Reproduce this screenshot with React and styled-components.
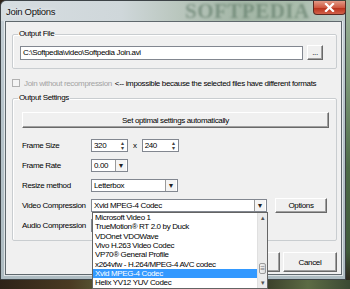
import React from "react";
import styled, { createGlobalStyle } from "styled-components";

const codecs = [
    "Microsoft Video 1",
    "TrueMotion® RT 2.0 by Duck",
    "VDOnet VDOWave",
    "Vivo H.263 Video Codec",
    "VP70® General Profile",
    "x264vfw - H.264/MPEG-4 AVC codec",
    "Xvid MPEG-4 Codec",
    "Helix YV12 YUV Codec",
];

const GlobalStyle = createGlobalStyle`
    html, body {
        margin: 0;
        padding: 0;
        width: 350px;
        height: 289px;
        overflow: hidden;
    }
    body {
        font-family: "Liberation Sans", Arial, sans-serif;
        font-size: 8px;
        letter-spacing: -0.35px;
        color: #000;
        background:
            linear-gradient(90deg, #2e2218 0%, #4a3a22 20%, #6b7a4a 38%, #a9b98e 42%, #3e4a2a 50%, #2a2a1e 70%, #5c6b44 88%, #3b4a34 100%);
    }
    * { box-sizing: border-box; }
`;

const App = () => {
    return (
        <>
            <GlobalStyle />
            <Desktop>
                <Window>
                    <TitleBar>
                        <Title>Join Options</Title>
                        <Watermark>SOFTPEDIA</Watermark>
                        <CloseButton>
                            <svg width="11" height="9" viewBox="0 0 11 9">
                                <path d="M2 1 L9 8 M9 1 L2 8" stroke="#fff" strokeWidth="2.2" strokeLinecap="square" />
                            </svg>
                        </CloseButton>
                    </TitleBar>
                    <Client>
                        <Group $top={7}>
                            <Legend>Output File</Legend>
                            <GroupBody $pad="6px 0 8px 7px">
                                <Row $gap={4}>
                                    <TextBox $width={283} $height={14}>C:\Softpedia\video\Softpedia Join.avi</TextBox>
                                    <Button $width={16} $height={15}>...</Button>
                                </Row>
                            </GroupBody>
                        </Group>
                        <CheckRow>
                            <CheckBox />
                            <DisabledText>Join without recompression</DisabledText>
                            <span>&lt;-- impossible because the selected files have different formats</span>
                        </CheckRow>
                        <Group $top={5}>
                            <Legend>Output Settings</Legend>
                            <GroupBody $pad="9px 7px 8px 9px">
                                <Button $height={16}>Set optimal settings automatically</Button>
                                <FieldList>
                                    <FieldRow>
                                        <FieldLabel>Frame Size</FieldLabel>
                                        <SpinBox value="320" />
                                        <Times>x</Times>
                                        <SpinBox value="240" />
                                    </FieldRow>
                                    <FieldRow>
                                        <FieldLabel>Frame Rate</FieldLabel>
                                        <Combo value="0.00" width={37} />
                                    </FieldRow>
                                    <FieldRow>
                                        <FieldLabel>Resize method</FieldLabel>
                                        <Combo value="Letterbox" width={87} />
                                    </FieldRow>
                                    <FieldRow>
                                        <FieldLabel>Video Compression</FieldLabel>
                                        <Combo value="Xvid MPEG-4 Codec" width={176} />
                                        <Button $width={52} $height={15} $ml={8}>Options</Button>
                                    </FieldRow>
                                    <FieldRow>
                                        <FieldLabel>Audio Compression</FieldLabel>
                                        <Combo value="" width={176} />
                                    </FieldRow>
                                </FieldList>
                            </GroupBody>
                        </Group>
                        <Footer>
                            <Button $width={54} $height={20}>OK</Button>
                            <Button $width={54} $height={20}>Cancel</Button>
                        </Footer>
                    </Client>
                    <DropList>
                        <Items>
                            {codecs.map(c => (
                                <Item key={c} $selected={c === "Xvid MPEG-4 Codec"}>{c}</Item>
                            ))}
                        </Items>
                        <ScrollBar>
                            <ScrollArrow>▴</ScrollArrow>
                            <ScrollTrack>
                                <Thumb>≡</Thumb>
                            </ScrollTrack>
                            <ScrollArrow>▾</ScrollArrow>
                        </ScrollBar>
                    </DropList>
                </Window>
            </Desktop>
        </>
    );
};

const SpinBox = ({ value }) => (
    <SpinFrame>
        <SpinText>{value}</SpinText>
        <SpinButtons>
            <span>▴</span>
            <span>▾</span>
        </SpinButtons>
    </SpinFrame>
);

const Combo = ({ value, width }) => (
    <ComboFrame $width={width}>
        <ComboText>{value}</ComboText>
        <ComboArrow>▾</ComboArrow>
    </ComboFrame>
);

export default App;

const Desktop = styled.div`
    width: 350px;
    height: 289px;
    background: linear-gradient(180deg, #9db39a 0%, #7a9676 30%, #4d6b48 60%, #3f5a3b 90%, #2f2a1f 100%) right top / 4px 280px no-repeat;
`;

const Window = styled.div`
    position: relative;
    width: 346px;
    height: 280px;
    display: flex;
    flex-direction: column;
    border: 1px solid #3d4347;
    border-radius: 6px 6px 0 0;
    background: linear-gradient(180deg, #c6d0d6 0%, #b7c4cb 40%, #aebcc2 100%);
`;

const TitleBar = styled.div`
    position: relative;
    height: 20px;
    display: flex;
    align-items: flex-start;
    padding-left: 5px;
    border-radius: 6px 6px 0 0;
    background: linear-gradient(90deg, #d6dde1 0%, #cfd7da 35%, #b9c6bd 52%, #a3b6a6 70%, #a9bcab 86%, #c2cdcc 100%);
`;

const Title = styled.div`
    margin-top: 5px;
    font-size: 9.5px;
    letter-spacing: -0.3px;
    line-height: 11px;
    color: #111;
    text-shadow: 0 0 4px rgba(255, 255, 255, 0.9);
`;

const Watermark = styled.div`
    position: absolute;
    left: 184px;
    top: -2px;
    font-family: "Liberation Serif", serif;
    font-weight: bold;
    font-size: 21px;
    letter-spacing: 0.5px;
    color: rgba(78, 108, 88, 0.5);
    filter: blur(1px);
`;

const CloseButton = styled.div`
    position: relative;
    margin-left: auto;
    margin-right: -1px;
    width: 33px;
    height: 14px;
    display: flex;
    align-items: center;
    justify-content: center;
    border: 1px solid #5b2a22;
    border-top: none;
    border-radius: 0 0 4px 4px;
    background: linear-gradient(180deg, #e29a86 0%, #cf5a43 50%, #b8321c 55%, #d2614a 100%);
`;

const Client = styled.div`
    flex: 1;
    margin: 0 3px 4px 4px;
    padding: 0 4px 0 6px;
    display: flex;
    flex-direction: column;
    background: #f0f0f0;
    border: 1px solid #5f686d;
    box-shadow: 0 0 0 1px rgba(255, 255, 255, 0.6);
`;

const Group = styled.fieldset`
    margin: ${p => p.$top}px 0 0;
    padding: 0;
    border: 1px solid #c9cdd0;
    border-radius: 2px;
    box-shadow: inset 1px 1px 0 #fff;
    min-width: 0;
`;

const Legend = styled.legend`
    margin-left: 5px;
    padding: 0 1px;
    line-height: 10px;
`;

const GroupBody = styled.div`
    padding: ${p => p.$pad};
`;

const Row = styled.div`
    display: flex;
    align-items: center;
    gap: ${p => p.$gap}px;
`;

const TextBox = styled.div`
    width: ${p => p.$width}px;
    height: ${p => p.$height}px;
    padding-left: 2px;
    line-height: 12px;
    background: #fff;
    border: 1px solid #828790;
    white-space: nowrap;
`;

const Button = styled.div`
    width: ${p => (p.$width ? `${p.$width}px` : "auto")};
    height: ${p => p.$height}px;
    margin-left: ${p => p.$ml || 0}px;
    display: flex;
    align-items: center;
    justify-content: center;
    background: #f0f0f0;
    border: 1px solid;
    border-color: #fff #696969 #696969 #fff;
    box-shadow: inset -1px -1px 0 #a0a0a0;
    white-space: nowrap;
`;

const CheckRow = styled.div`
    margin-top: 9px;
    height: 10px;
    display: flex;
    align-items: center;
    white-space: nowrap;
`;

const CheckBox = styled.div`
    width: 8px;
    height: 8px;
    margin-right: 4px;
    border: 1px solid #b1b1b1;
    background: #f4f4f4;
`;

const DisabledText = styled.span`
    color: #a3a3a3;
    margin-right: 3px;
`;

const FieldList = styled.div`
    margin-top: 11px;
    display: flex;
    flex-direction: column;
    gap: 7px;
`;

const FieldRow = styled.div`
    height: 13px;
    display: flex;
    align-items: center;
`;

const FieldLabel = styled.div`
    width: 69px;
    white-space: nowrap;
`;

const SpinFrame = styled.div`
    width: 37px;
    height: 13px;
    display: flex;
    background: #fff;
    border: 1px solid #828790;
`;

const SpinText = styled.div`
    flex: 1;
    padding-left: 2px;
    line-height: 11px;
`;

const SpinButtons = styled.div`
    width: 9px;
    display: flex;
    flex-direction: column;
    align-items: center;
    justify-content: center;
    font-size: 6px;
    line-height: 5px;
    color: #444;
`;

const Times = styled.div`
    margin: 0 5px 0 5px;
`;

const ComboFrame = styled.div`
    width: ${p => p.$width}px;
    height: 13px;
    display: flex;
    align-items: stretch;
    background: #fff;
    border: 1px solid #828790;
`;

const ComboText = styled.div`
    flex: 1;
    padding-left: 2px;
    line-height: 11px;
    white-space: nowrap;
`;

const ComboArrow = styled.div`
    width: 11px;
    margin: 0 1px 0 0;
    display: flex;
    align-items: center;
    justify-content: center;
    font-size: 8px;
    color: #222;
    background: #f4f4f4;
    border: 1px solid #9a9a9a;
    border-width: 0 0 0 1px;
`;

const Footer = styled.div`
    margin-top: 11px;
    display: flex;
    justify-content: flex-end;
    gap: 3px;
`;

const DropList = styled.div`
    position: absolute;
    left: 91px;
    top: 211px;
    width: 176px;
    height: 77px;
    display: flex;
    background: #fff;
    border: 1px solid #646464;
`;

const Items = styled.div`
    flex: 1;
    display: flex;
    flex-direction: column;
`;

const Item = styled.div`
    height: 9.35px;
    line-height: 9.35px;
    padding-left: 2px;
    white-space: nowrap;
    overflow: hidden;
    background: ${p => (p.$selected ? "#3399ff" : "transparent")};
    color: ${p => (p.$selected ? "#fff" : "#000")};
`;

const ScrollBar = styled.div`
    width: 10px;
    display: flex;
    flex-direction: column;
    background: #ebebeb;
    border-left: 1px solid #e0e0e0;
`;

const ScrollArrow = styled.div`
    height: 10px;
    display: flex;
    align-items: center;
    justify-content: center;
    font-size: 7px;
    color: #555;
`;

const ScrollTrack = styled.div`
    flex: 1;
    display: flex;
    flex-direction: column;
    justify-content: flex-end;
`;

const Thumb = styled.div`
    height: 11px;
    margin: 0 1px 4px;
    display: flex;
    align-items: center;
    justify-content: center;
    font-size: 8px;
    color: #777;
    background: linear-gradient(90deg, #f3f3f3, #dcdcdc);
    border: 1px solid #9b9b9b;
    border-radius: 2px;
`;
